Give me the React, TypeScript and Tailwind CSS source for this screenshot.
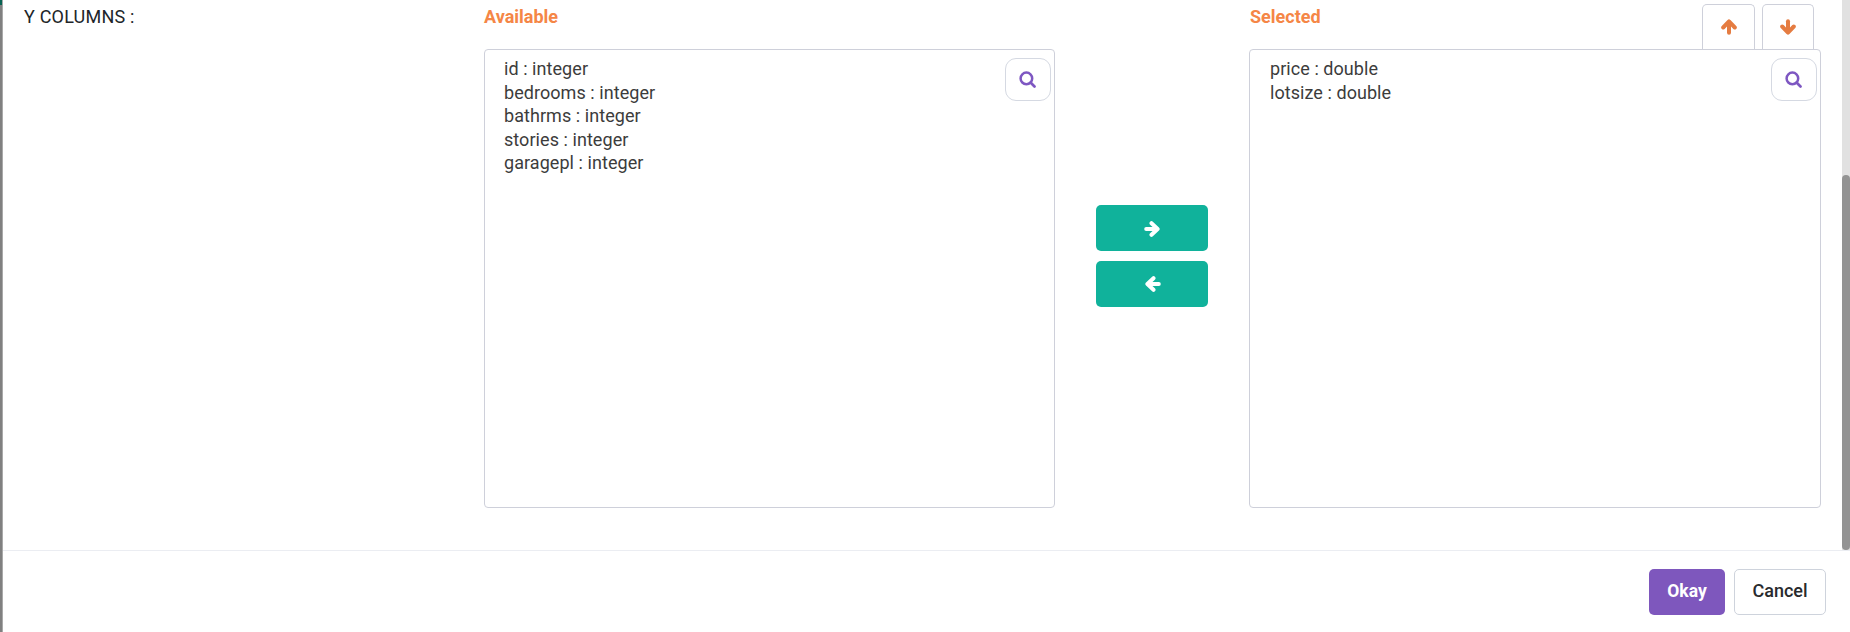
import type { ReactNode } from "react";

const available = [
  "id : integer",
  "bedrooms : integer",
  "bathrms : integer",
  "stories : integer",
  "garagepl : integer",
];
const selected = ["price : double", "lotsize : double"];

function Arrow({ turn }: { turn: string }) {
  return (
    <svg viewBox="0 0 16 16" className={`block h-4 w-4 ${turn}`} fill="none" stroke="currentColor">
      <path d="M2.2 8H12.5" strokeWidth="4" strokeLinecap="round" />
      <path d="M7.5 2.2L13.6 8L7.5 13.8" strokeWidth="4" strokeLinecap="round" strokeLinejoin="round" />
    </svg>
  );
}

function SearchButton({ className }: { className: string }) {
  return (
    <button
      aria-label="Search"
      className={`absolute top-2 flex h-[43px] items-center justify-center rounded-[11px] border border-[#d5d9e2] bg-white text-[#7e57c2] ${className}`}
    >
      <svg viewBox="0 0 17 17" className="h-[17px] w-[17px]" fill="none" stroke="currentColor" strokeLinecap="round">
        <circle cx="7.4" cy="7.4" r="5.8" strokeWidth="2.5" />
        <path d="M11.8 11.8L15.5 15.5" strokeWidth="2.7" />
      </svg>
    </button>
  );
}

function ListBox({ items, children, className }: { items: string[]; children: ReactNode; className: string }) {
  return (
    <div className={`relative h-[459px] rounded-[4px] border border-[#ced0da] pt-[7px] ${className}`}>
      <ul className="text-[18px] leading-[23.6px] tracking-[0.06px] text-[#3c3c3c]">
        {items.map((item) => (
          <li key={item}>{item}</li>
        ))}
      </ul>
      {children}
    </div>
  );
}

export default function App() {
  return (
    <div className="flex h-[632px] w-[1850px] overflow-hidden bg-white font-['Roboto',sans-serif]">
      <div className="flex w-[3px] shrink-0 flex-col border-r border-[#a9a9a9] bg-[#808080]">
        <div className="h-[5px] bg-[#086353]" />
      </div>
      <div className="flex min-w-0 flex-1 flex-col">
        <div className="flex h-[550px]">
          <div className="w-[481px] pt-1.5 pl-[21px] text-[18px] leading-[22px] tracking-[0.2px] text-[#212529]">Y COLUMNS :</div>
          <section className="w-[571px]">
            <h2 className="h-[49px] pt-1.5 text-[18px] leading-[22px] font-bold text-[#f58646]">Available</h2>
            <ListBox items={available} className="w-[571px] pl-[19px]">
              <SearchButton className="right-[3px] w-[46px] pr-px" />
            </ListBox>
          </section>
          <div className="ml-[41px] flex w-[112px] flex-col gap-2.5 pt-[205px]">
            <button aria-label="Add" className="flex h-[46px] items-center justify-center rounded-[5px] bg-[#10b29b] pt-0.5 text-white">
              <Arrow turn="rotate-0" />
            </button>
            <button aria-label="Remove" className="flex h-[46px] items-center justify-center rounded-[5px] bg-[#10b29b] pl-px text-white">
              <Arrow turn="rotate-180" />
            </button>
          </div>
          <section className="ml-[41px] w-[572px]">
            <div className="flex h-[49px] justify-between pr-[7px] pl-px">
              <h2 className="pt-1.5 text-[18px] leading-[22px] font-bold text-[#f58646]">Selected</h2>
              <div className="flex gap-[7px] pt-1 text-[#e57c41]">
                <button aria-label="Move up" className="flex w-[53px] justify-center rounded-t-[5px] border border-b-0 border-[#ced0da] pt-[14px]">
                  <Arrow turn="-rotate-90" />
                </button>
                <button aria-label="Move down" className="flex w-[52px] justify-center rounded-t-[5px] border border-b-0 border-[#ced0da] pt-[14px]">
                  <Arrow turn="rotate-90" />
                </button>
              </div>
            </div>
            <ListBox items={selected} className="w-[572px] pl-5">
              <SearchButton className="right-[3px] w-[46px] pr-px" />
            </ListBox>
          </section>
          <div className="ml-auto w-2 bg-[#e1e1e1] pt-[175px]">
            <div className="h-[375px] rounded-[4px] bg-[#939393]" />
          </div>
        </div>
        <footer className="flex h-[82px] justify-end gap-[9px] border-t border-[#ebedf2] pt-[18px] pr-6">
          <button className="h-[46px] w-[76px] rounded-[5px] bg-[#7e57bd] pb-0.5 text-[17.5px] font-bold text-white">Okay</button>
          <button className="h-[46px] w-[92px] rounded-[5px] border border-[#ced3dc] pb-1 text-[18px] font-medium text-[#282a2d]">Cancel</button>
        </footer>
      </div>
    </div>
  );
}
